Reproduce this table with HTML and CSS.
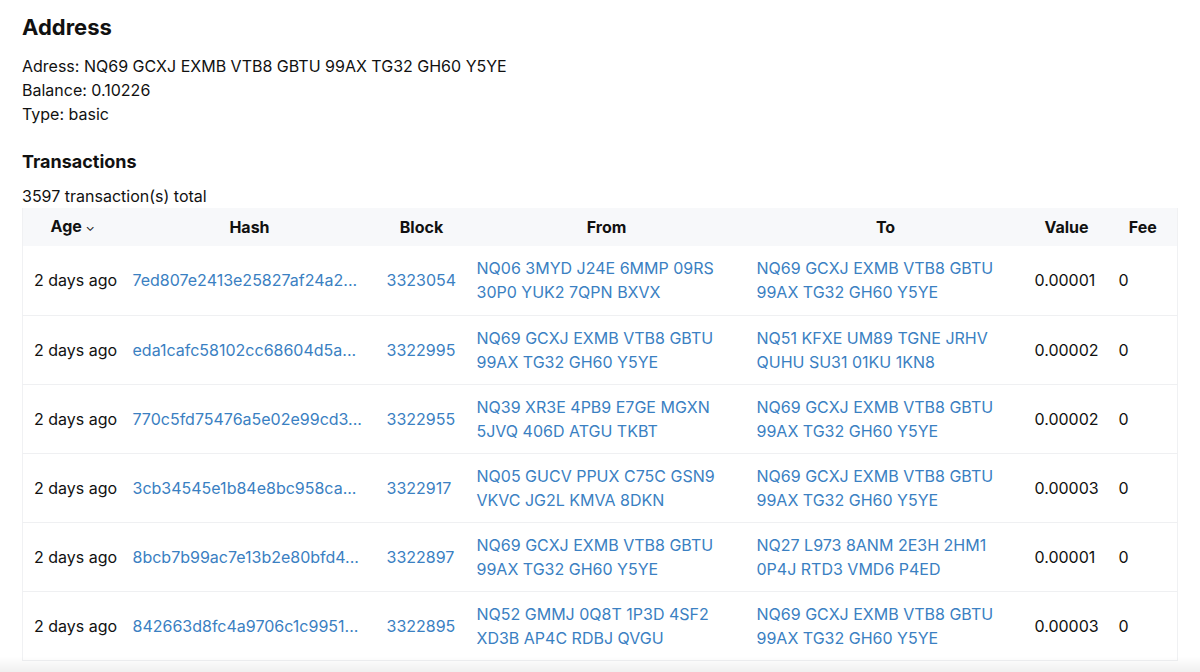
FILE: index.html
```html
<!DOCTYPE html>
<html>
<head>
<meta charset="utf-8">
<link rel="stylesheet" href="styles.css">
</head>
<body>
<main class="page">
  <h1 class="title">Address</h1>
  <div class="info">
    <div>Adress: NQ69 GCXJ EXMB VTB8 GBTU 99AX TG32 GH60 Y5YE</div>
    <div>Balance: 0.10226</div>
    <div>Type: basic</div>
  </div>
  <h2 class="subtitle">Transactions</h2>
  <div class="total">3597 transaction(s) total</div>
  <table class="tx">
    <colgroup>
      <col class="c-age"><col class="c-hash"><col class="c-block"><col class="c-from"><col class="c-to"><col class="c-value"><col class="c-fee">
    </colgroup>
    <thead>
      <tr>
        <th>Age <span class="chev">&#8964;</span></th>
        <th>Hash</th>
        <th>Block</th>
        <th>From</th>
        <th>To</th>
        <th>Value</th>
        <th>Fee</th>
      </tr>
    </thead>
    <tbody>
      <tr>
        <td>2 days ago</td>
        <td><a>7ed807e2413e25827af24a2...</a></td>
        <td><a>3323054</a></td>
        <td><a>NQ06 3MYD J24E 6MMP 09RS 30P0 YUK2 7QPN BXVX</a></td>
        <td><a>NQ69 GCXJ EXMB VTB8 GBTU 99AX TG32 GH60 Y5YE</a></td>
        <td>0.00001</td>
        <td>0</td>
      </tr>
      <tr>
        <td>2 days ago</td>
        <td><a>eda1cafc58102cc68604d5a...</a></td>
        <td><a>3322995</a></td>
        <td><a>NQ69 GCXJ EXMB VTB8 GBTU 99AX TG32 GH60 Y5YE</a></td>
        <td><a>NQ51 KFXE UM89 TGNE JRHV QUHU SU31 01KU 1KN8</a></td>
        <td>0.00002</td>
        <td>0</td>
      </tr>
      <tr>
        <td>2 days ago</td>
        <td><a>770c5fd75476a5e02e99cd3...</a></td>
        <td><a>3322955</a></td>
        <td><a>NQ39 XR3E 4PB9 E7GE MGXN 5JVQ 406D ATGU TKBT</a></td>
        <td><a>NQ69 GCXJ EXMB VTB8 GBTU 99AX TG32 GH60 Y5YE</a></td>
        <td>0.00002</td>
        <td>0</td>
      </tr>
      <tr>
        <td>2 days ago</td>
        <td><a>3cb34545e1b84e8bc958ca...</a></td>
        <td><a>3322917</a></td>
        <td><a>NQ05 GUCV PPUX C75C GSN9 VKVC JG2L KMVA 8DKN</a></td>
        <td><a>NQ69 GCXJ EXMB VTB8 GBTU 99AX TG32 GH60 Y5YE</a></td>
        <td>0.00003</td>
        <td>0</td>
      </tr>
      <tr>
        <td>2 days ago</td>
        <td><a>8bcb7b99ac7e13b2e80bfd4...</a></td>
        <td><a>3322897</a></td>
        <td><a>NQ69 GCXJ EXMB VTB8 GBTU 99AX TG32 GH60 Y5YE</a></td>
        <td><a>NQ27 L973 8ANM 2E3H 2HM1 0P4J RTD3 VMD6 P4ED</a></td>
        <td>0.00001</td>
        <td>0</td>
      </tr>
      <tr>
        <td>2 days ago</td>
        <td><a>842663d8fc4a9706c1c9951...</a></td>
        <td><a>3322895</a></td>
        <td><a>NQ52 GMMJ 0Q8T 1P3D 4SF2 XD3B AP4C RDBJ QVGU</a></td>
        <td><a>NQ69 GCXJ EXMB VTB8 GBTU 99AX TG32 GH60 Y5YE</a></td>
        <td>0.00003</td>
        <td>0</td>
      </tr>
    </tbody>
  </table>
</main>
<div class="bottom-shade"></div>
</body>
</html>
```
FILE: styles.css
```css
html, body {
  margin: 0;
  padding: 0;
  background: #fff;
}
body {
  font-family: Inter, "Liberation Sans", sans-serif;
  font-size: 16px;
  color: #111;
  overflow: hidden;
  height: 672px;
}
.page {
  padding: 12px 23px 0 22px;
}
.title {
  font-size: 22px;
  font-weight: 700;
  margin: 0 0 12px 0;
  line-height: 30px;
}
.info {
  line-height: 24px;
}
.subtitle {
  font-size: 18px;
  font-weight: 700;
  margin: 24px 0 10px 0;
  line-height: 24px;
}
.total {
  line-height: 24px;
}
.tx {
  width: 1155px;
  border-collapse: collapse;
  table-layout: fixed;
  border-left: 1px solid #f0f1f3;
  border-right: 1px solid #f0f1f3;
}
.c-age { width: 100px; }
.c-hash { width: 254px; }
.c-block { width: 90px; }
.c-from { width: 280px; }
.c-to { width: 278px; }
.c-value { width: 84px; }
.c-fee { width: 69px; }
.tx th {
  background: #f7f8fa;
  font-weight: 700;
  text-align: center;
  height: 36px;
  padding: 0 10px;
  line-height: 36px;
}
.chev {
  font-size: 12px;
  font-weight: 400;
  position: relative;
  top: -1px;
}
.tx td {
  height: 69px;
  box-sizing: border-box;
  padding: 0 10px;
  line-height: 24px;
  text-align: left;
  vertical-align: middle;
  border-bottom: 1px solid #eff0f2;
}
.tx td:first-child {
  padding-left: 11px;
  white-space: nowrap;
}
.tx a {
  color: #3a80c2;
  text-decoration: none;
}
.bottom-shade {
  position: fixed;
  left: 0;
  right: 0;
  bottom: 0;
  height: 16px;
  background: linear-gradient(to bottom, rgba(0,0,0,0) 0%, rgba(0,0,0,0.06) 100%);
}
```
